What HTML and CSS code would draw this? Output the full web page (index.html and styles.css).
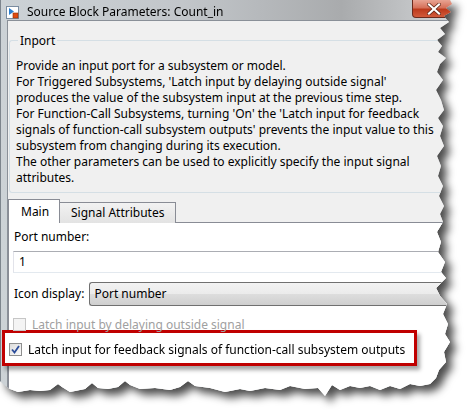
FILE: index.html
```html
<!DOCTYPE html>
<html lang="en">
<head>
  <meta charset="UTF-8">
  <title>Source Block Parameters: Count_in</title>
  <link rel="stylesheet" href="styles.css">
</head>
<body>

  <div class="paper">
    <div class="win">
      <!-- Title bar -->
      <div class="titlebar">
        <svg class="app-icon" width="13" height="13" viewBox="0 0 13 13">
          <rect x="0.5" y="0.5" width="12" height="12" fill="#fff" stroke="#7a8ca0"/>
          <path d="M3 2 L8 5.5 L3 9 Z" fill="#2a7fd0"/>
          <rect x="7" y="7" width="5" height="5" fill="#e04a10" stroke="#903000" stroke-width="0.6"/>
        </svg>
        <span class="title">Source Block Parameters: Count_in</span>
        <div class="close">
          <svg width="14" height="12" viewBox="0 0 14 12">
            <path d="M2 1.5 L12 10.5 M12 1.5 L2 10.5" stroke="#5a2010" stroke-width="3.6" stroke-linecap="square"/>
            <path d="M2 1.5 L12 10.5 M12 1.5 L2 10.5" stroke="#fff" stroke-width="2.2" stroke-linecap="square"/>
          </svg>
        </div>
      </div>

      <div class="client">
        <!-- Inport description -->
        <fieldset class="group">
          <legend>Inport</legend>
          <p class="desc">Provide an input port for a subsystem or model.<br>
For Triggered Subsystems, 'Latch input by delaying outside signal'<br>
produces the value of the subsystem input at the previous time step.<br>
For Function-Call Subsystems, turning 'On' the 'Latch input for feedback<br>
signals of function-call subsystem outputs' prevents the input value to this<br>
subsystem from changing during its execution.<br>
The other parameters can be used to explicitly specify the input signal<br>
attributes.</p>
        </fieldset>

        <!-- Tabs -->
        <div class="tabs">
          <div class="tab selected">Main</div>
          <div class="tab">Signal Attributes</div>
          <div class="tab-rest"></div>
        </div>

        <div class="pane">
          <div class="label">Port number:</div>
          <div class="textbox">1</div>

          <div class="row">
            <span class="label">Icon display:</span>
            <div class="combo">Port number</div>
          </div>

          <div class="check disabled">
            <span class="box"></span>
            <span>Latch input by delaying outside signal</span>
          </div>

          <div class="highlight">
            <div class="check">
              <span class="box">
                <svg width="9" height="9" viewBox="0 0 9 9">
                  <path d="M1 4.5 L3.5 7.5 L8 1" fill="none" stroke="#2b4c9a" stroke-width="1.8"/>
                </svg>
              </span>
              <span>Latch input for feedback signals of function-call subsystem outputs</span>
            </div>
          </div>
        </div>
      </div>
    </div>
  </div>

</body>
</html>
```

FILE: styles.css
```css
/* General */
body {
  margin: 0;
  background: #ffffff;
  font-family: "Noto Sans", sans-serif;
  font-size: 12px;
  color: #000;
}

/* Torn paper effect */
.paper {
  width: 465px;
  height: 410px;
  filter: drop-shadow(6px 6px 4px rgba(0, 0, 0, 0.7));
}
.win {
  width: 455px;
  height: 402px;
  box-sizing: border-box;
  background: linear-gradient(90deg, #ccd2d6 0%, #c2c6ca 40%, #a9abad 75%, #d2d4d6 100%);
  border-left: 1px solid #7d858d;
  display: flex;
  flex-direction: column;
  clip-path: polygon(0 0, 450px 0, 452px 4px, 446px 8px, 451px 12px, 444px 16px, 449px 22px, 440px 28px, 445px 34px, 437px 40px, 442px 46px, 438px 52px, 446px 58px, 440px 64px, 437px 72px, 443px 80px, 436px 90px, 441px 100px, 444px 110px, 438px 118px, 443px 126px, 440px 136px, 444px 146px, 437px 156px, 441px 166px, 438px 176px, 443px 186px, 439px 196px, 444px 206px, 440px 214px, 443px 222px, 437px 232px, 441px 242px, 438px 252px, 445px 262px, 441px 272px, 446px 278px, 436px 288px, 440px 296px, 447px 304px, 443px 314px, 448px 324px, 445px 334px, 450px 342px, 444px 352px, 446px 362px, 439px 370px, 436px 378px, 430px 384px, 420px 386px, 410px 384px, 400px 389px, 390px 386px, 380px 390px, 370px 386px, 360px 388px, 350px 386px, 340px 390px, 332px 385px, 325px 396px, 318px 388px, 305px 389px, 290px 386px, 280px 390px, 265px 388px, 250px 391px, 240px 389px, 225px 392px, 210px 388px, 195px 386px, 188px 381px, 180px 387px, 170px 390px, 155px 388px, 140px 389px, 130px 385px, 125px 381px, 118px 387px, 108px 389px, 98px 388px, 92px 383px, 85px 389px, 70px 392px, 62px 387px, 58px 384px, 50px 390px, 40px 391px, 30px 390px, 18px 392px, 10px 389px, 4px 385px, 0 381px);
}

/* Title bar */
.titlebar {
  height: 28px;
  display: flex;
  align-items: center;
  padding: 2px 0 0 5px;
  box-sizing: border-box;
  position: relative;
}
.app-icon {
  margin-top: 2px;
}
.title {
  margin-left: 8px;
  margin-top: 1px;
}
.close {
  position: absolute;
  left: 411px;
  top: 0;
  width: 44px;
  height: 18px;
  box-sizing: border-box;
  border: 1px solid #6b2a1c;
  border-top: none;
  border-radius: 0 0 4px 4px;
  background: linear-gradient(#e8a493 0%, #d6715a 45%, #bc3a1c 55%, #d25a3a 100%);
  display: flex;
  justify-content: center;
  align-items: center;
}

/* Client area */
.client {
  flex: 1;
  margin-left: 6px;
  background: #f0f0f0;
  border-top: 1px solid #8a9098;
  border-left: 1px solid #8a9098;
  padding: 11px 0 0 1px;
}

/* Group box */
.group {
  margin: 0;
  padding: 0 0 0 6px;
  border: 1px solid #d5dfe5;
  border-right: none;
  border-radius: 3px 0 0 3px;
  box-sizing: border-box;
  height: 161px;
}
.group legend {
  padding: 0 2px;
  margin-left: 2px;
}
.desc {
  margin: 9px 0 0;
  line-height: 16px;
  white-space: nowrap;
}

/* Tabs */
.tabs {
  display: flex;
  align-items: flex-end;
  margin-top: 6px;
  height: 24px;
}
.tab {
  height: 20px;
  padding: 0 11px;
  line-height: 20px;
  border: 1px solid #898c95;
  border-bottom: none;
  background: linear-gradient(#f2f2f2, #e3e3e3);
  border-left: none;
}
.tab.selected {
  height: 23px;
  line-height: 24px;
  padding: 0 11px 0 12px;
  width: 27px;
  background: #ffffff;
  border-left: 1px solid #898c95;
  margin-left: -1px;
}
.tab-rest {
  flex: 1;
  border-bottom: 1px solid #898c95;
}

/* Tab pane */
.pane {
  background: #ffffff;
  border-left: 1px solid #898c95;
  margin-left: -1px;
  padding: 6px 0 0 5px;
  height: 200px;
}
.label {
  line-height: 16px;
}
.textbox {
  margin: 6px 0 0 -1px;
  height: 20px;
  line-height: 20px;
  padding-left: 5px;
  border-top: 1px solid #abadb3;
  border-left: 1px solid #e2e3ea;
  border-bottom: 1px solid #e3e9ef;
}
.row {
  display: flex;
  align-items: center;
  margin-top: 9px;
}
.combo {
  flex: 1;
  margin-left: 5px;
  height: 22px;
  line-height: 22px;
  padding-left: 4px;
  border: 1px solid #707070;
  border-right: none;
  border-radius: 3px 0 0 3px;
  background: linear-gradient(#f2f2f2 0%, #ebebeb 50%, #dddddd 51%, #cfcfcf 100%);
}

/* Checkboxes */
.check {
  display: flex;
  align-items: center;
  gap: 6px;
  height: 16px;
}
.check .box {
  width: 11px;
  height: 11px;
  border: 1px solid #8e8f8f;
  background: linear-gradient(135deg, #dcdcdc, #fbfbfb);
  display: flex;
  align-items: center;
  justify-content: center;
}
.check.disabled {
  margin: 10px 0 0 -1px;
  color: #a0a0a0;
}
.check.disabled .box {
  border-color: #c6c6c6;
  background: #f4f4f4;
}
.highlight {
  margin: -2px 0 0 -12px;
  width: 405px;
  padding: 8px 0 6px 4px;
  border: 3px solid #c00000;
  box-shadow: 3px 4px 4px rgba(0, 0, 0, 0.35);
  background: #ffffff;
}
```
